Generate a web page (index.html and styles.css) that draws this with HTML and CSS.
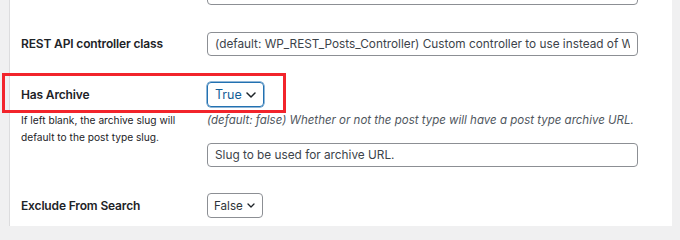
FILE: index.html
```html
<!DOCTYPE html>
<html>
<head>
<meta charset="utf-8">
<link rel="stylesheet" href="styles.css">
</head>
<body>
<div class="panel">
  <div class="row row-top">
    <div class="label"></div>
    <div class="field"><div class="input"></div></div>
  </div>
  <div class="row row-rest">
    <div class="label"><span class="lbl">REST API controller class</span></div>
    <div class="field"><div class="input"><span class="ph">(default: WP_REST_Posts_Controller) Custom controller to use instead of WP_REST_Posts_Controller.</span></div></div>
  </div>
  <div class="row row-archive">
    <div class="label">
      <div class="lbl lbl-line">Has Archive</div>
      <p class="hint">If left blank, the archive slug will default to the post type slug.</p>
    </div>
    <div class="field">
      <div class="select select-focus"><span>True</span>
        <svg class="chev" width="10" height="6" viewBox="0 0 10 6"><path d="M1 1 L5 5 L9 1" fill="none" stroke="#1d2327" stroke-width="1.5" stroke-linecap="round" stroke-linejoin="round"/></svg>
      </div>
      <p class="desc">(default: false) Whether or not the post type will have a post type archive URL.</p>
      <div class="input input-slug"><span class="ph">Slug to be used for archive URL.</span></div>
    </div>
  </div>
  <div class="row row-exclude">
    <div class="label"><span class="lbl">Exclude From Search</span></div>
    <div class="field">
      <div class="select select-plain"><span>False</span>
        <svg class="chev" width="8" height="5" viewBox="0 0 8 5"><path d="M1 1 L4 4 L7 1" fill="none" stroke="#1d2327" stroke-width="1.3" stroke-linecap="round" stroke-linejoin="round"/></svg>
      </div>
    </div>
  </div>
  <div class="highlight"></div>
</div>
</body>
</html>
```
FILE: styles.css
```css
html, body {
  margin: 0;
  padding: 0;
  background: #f0f0f1;
  overflow: hidden;
}
body {
  font-family: Inter, "Liberation Sans", sans-serif;
  color: #1d2327;
}
.panel {
  position: relative;
  display: flow-root;
  margin-left: 9px;
  width: 663px;
  height: 226px;
  background: #fff;
  border-left: 1px solid #dcdcde;
  box-sizing: border-box;
  padding-left: 11px;
}
.row {
  display: flex;
  align-items: flex-start;
}
.label {
  width: 186px;
  flex: none;
}
.field {
  width: 431px;
  flex: none;
}
.lbl {
  font-size: 12px;
  font-weight: 600;
  letter-spacing: -0.15px;
  line-height: 24px;
  display: block;
}
.input {
  box-sizing: border-box;
  height: 24px;
  border: 1px solid #8c8f94;
  border-radius: 4px;
  background: #fff;
  padding: 0 7px;
  display: flex;
  align-items: center;
  white-space: nowrap;
}
.ph {
  display: block;
  overflow: hidden;
  font-size: 11.8px;
  color: #3c434a;
}
.row-top {
  margin-top: -20px;
}
.row-top .input {
  height: 25px;
}
.row-rest {
  margin-top: 27px;
}
.row-archive {
  margin-top: 26px;
}
.lbl-line {
  line-height: 25px;
}
.hint {
  margin: 5px 0 0;
  font-size: 10.2px;
  line-height: 17px;
  color: #1d2327;
  width: 170px;
}
.select {
  box-sizing: border-box;
  height: 25px;
  border: 1px solid #8c8f94;
  border-radius: 4px;
  display: flex;
  align-items: center;
  justify-content: space-between;
  padding: 0 7px 0 7px;
  font-size: 12.5px;
}
.select-focus {
  width: 57px;
  border-color: #2271b1;
  box-shadow: 0 0 0 0.5px #2271b1;
}
.select-focus span {
  color: #135e96;
}
.select-plain {
  width: 56px;
  color: #2c3338;
  padding: 0 7px 0 6px;
  font-size: 11.6px;
}
.desc {
  margin: 5px 0 0;
  font-size: 11.5px;
  line-height: 16px;
  font-style: italic;
  color: #50575e;
  white-space: nowrap;
}
.input-slug {
  margin-top: 15px;
}
.row-exclude {
  margin-top: 26px;
}
.row-exclude .lbl {
  line-height: 25px;
}
.highlight {
  position: absolute;
  left: -8px;
  top: 73px;
  width: 284px;
  height: 40px;
  box-sizing: border-box;
  border: 3px solid #f2242b;
}
```
